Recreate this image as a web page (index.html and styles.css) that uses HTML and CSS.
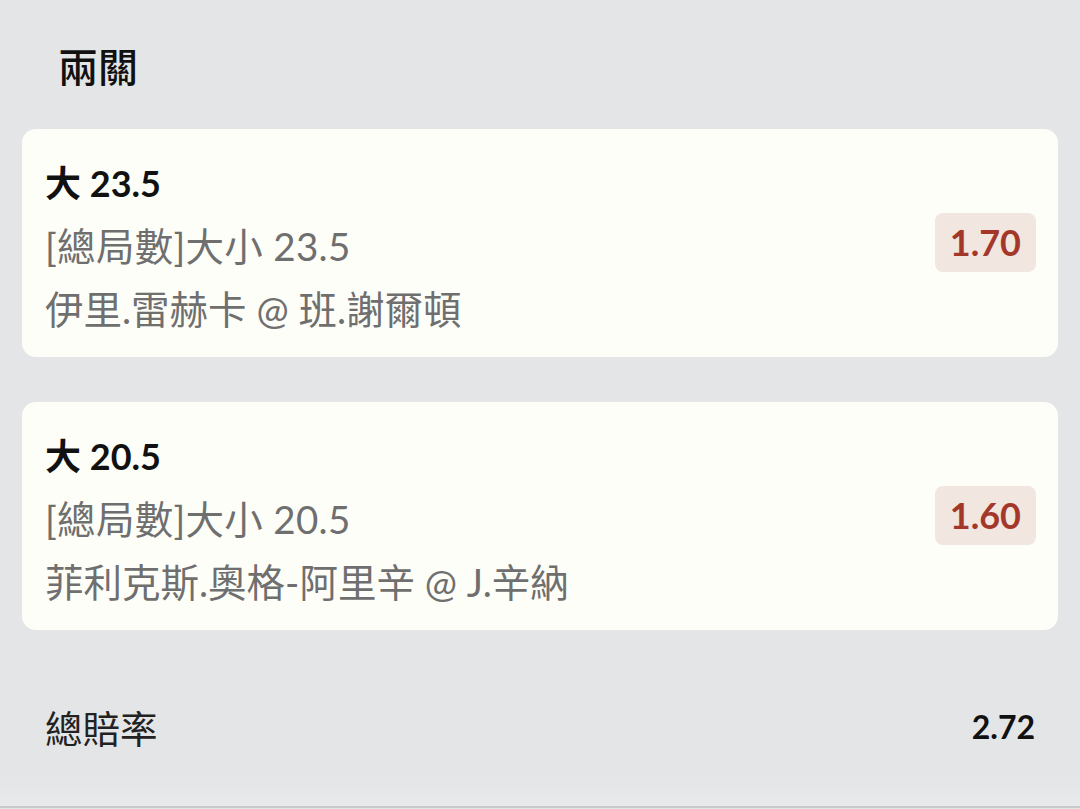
FILE: index.html
```html
<!DOCTYPE html>
<html lang="zh-Hant">
<head>
    <meta charset="UTF-8">
    <meta name="viewport" content="width=device-width, initial-scale=1.0">
    <title>兩關</title>
    <link rel="stylesheet" href="styles.css">
</head>
<body>
    <h1 class="title">兩關</h1>

    <div class="leg">
        <div class="leg-info">
            <div class="pick">大 23.5</div>
            <div class="market">[總局數]大小 23.5</div>
            <div class="match">伊里.雷赫卡 @ 班.謝爾頓</div>
        </div>
        <span class="odds">1.70</span>
    </div>

    <div class="leg">
        <div class="leg-info">
            <div class="pick">大 20.5</div>
            <div class="market">[總局數]大小 20.5</div>
            <div class="match">菲利克斯.奧格-阿里辛 @ J.辛納</div>
        </div>
        <span class="odds">1.60</span>
    </div>

    <div class="total">
        <span class="total-label">總賠率</span>
        <span class="total-value">2.72</span>
    </div>
</body>
</html>
```

FILE: styles.css
```css
body {
    font-family: 'Lato', 'Noto Sans CJK TC', sans-serif;
    background: linear-gradient(to bottom, #e4e5e7 0, #e4e5e7 780px, #e9eaec 806px);
    margin: 0;
    padding: 0 22px;
    height: 808px;
    box-sizing: border-box;
    border-bottom: 2px solid #c9cacc;
    color: #111;
}
.title {
    margin: 0;
    padding: 40px 0 0 36px;
    height: 129px;
    box-sizing: border-box;
    font-size: 40px;
    font-weight: 500;
    line-height: 50px;
    font-family: 'Noto Sans CJK TC', sans-serif;
}
.leg {
    display: flex;
    align-items: center;
    justify-content: space-between;
    background-color: #fefef8;
    border-radius: 14px;
    padding: 23px 22px 16px 23px;
    margin-bottom: 45px;
}
.leg-info div {
    line-height: 63px;
}
.pick {
    font-size: 36px;
    font-weight: 700;
    color: #111;
}
.market, .match {
    font-size: 38.5px;
    color: #6f6f6f;
}
.market {
    letter-spacing: 0.3px;
}
.odds {
    background-color: #f2e6e0;
    color: #a3382a;
    font-weight: 700;
    font-size: 36px;
    line-height: 59px;
    padding: 0 15px;
    margin-bottom: 9px;
    border-radius: 8px;
}
.total {
    display: flex;
    justify-content: space-between;
    align-items: center;
    padding: 30px 23px 0 23px;
    line-height: 44px;
}
.total-label {
    font-family: 'Noto Sans CJK TC', sans-serif;
    font-size: 37.5px;
    color: #222;
}
.total-value {
    font-weight: 700;
    font-size: 32px;
}
```
